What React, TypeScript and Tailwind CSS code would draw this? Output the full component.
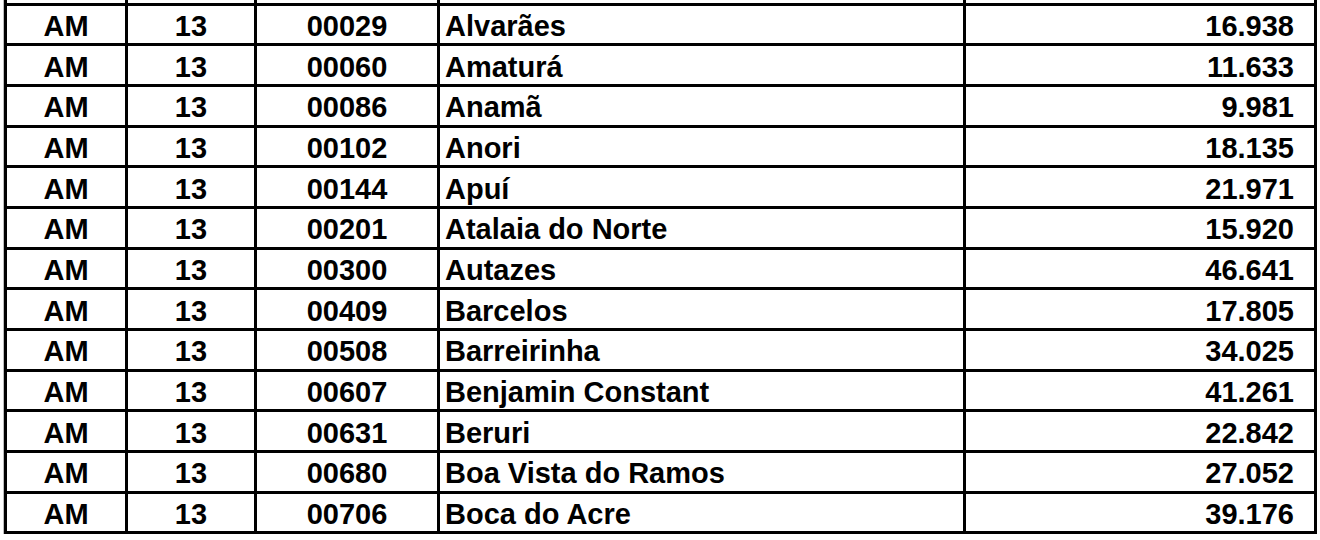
import React from "react";

type Row = {
  uf: string;
  code: string;
  mun: string;
  name: string;
  pop: string;
};

const rows: Row[] = [
  { uf: "AM", code: "13", mun: "00029", name: "Alvarães", pop: "16.938" },
  { uf: "AM", code: "13", mun: "00060", name: "Amaturá", pop: "11.633" },
  { uf: "AM", code: "13", mun: "00086", name: "Anamã", pop: "9.981" },
  { uf: "AM", code: "13", mun: "00102", name: "Anori", pop: "18.135" },
  { uf: "AM", code: "13", mun: "00144", name: "Apuí", pop: "21.971" },
  { uf: "AM", code: "13", mun: "00201", name: "Atalaia do Norte", pop: "15.920" },
  { uf: "AM", code: "13", mun: "00300", name: "Autazes", pop: "46.641" },
  { uf: "AM", code: "13", mun: "00409", name: "Barcelos", pop: "17.805" },
  { uf: "AM", code: "13", mun: "00508", name: "Barreirinha", pop: "34.025" },
  { uf: "AM", code: "13", mun: "00607", name: "Benjamin Constant", pop: "41.261" },
  { uf: "AM", code: "13", mun: "00631", name: "Beruri", pop: "22.842" },
  { uf: "AM", code: "13", mun: "00680", name: "Boa Vista do Ramos", pop: "27.052" },
  { uf: "AM", code: "13", mun: "00706", name: "Boca do Acre", pop: "39.176" },
];

const cell =
  "border-[3px] border-black h-[40.7px] pt-[4px] pb-0 leading-none align-middle";

export default function App() {
  return (
    <div className="w-[1320px] h-[540px] overflow-hidden bg-white">
      <div className="ml-[3px] w-[1311px] border-l border-[#bdbdbd]">
        <table
          className="table-fixed border-collapse w-[1310px] text-black font-bold text-[29px]"
          style={{ fontFamily: '"Liberation Sans", Arial, sans-serif' }}
        >
          <colgroup>
            <col className="w-[121px]" />
            <col className="w-[129px]" />
            <col className="w-[183px]" />
            <col className="w-[526px]" />
            <col className="w-[351px]" />
          </colgroup>
          <tbody>
            <tr>
              <td className="h-[4px] p-0 border-x-[3px] border-black" />
              <td className="h-[4px] p-0 border-x-[3px] border-black" />
              <td className="h-[4px] p-0 border-x-[3px] border-black" />
              <td className="h-[4px] p-0 border-x-[3px] border-black" />
              <td className="h-[4px] p-0 border-x-[3px] border-black" />
            </tr>
            {rows.map((r) => (
              <tr key={r.mun}>
                <td className={`${cell} px-0 text-center`}>{r.uf}</td>
                <td className={`${cell} px-0 text-center`}>{r.code}</td>
                <td className={`${cell} px-0 text-center`}>{r.mun}</td>
                <td className={`${cell} text-left pl-[5px] pr-0`}>{r.name}</td>
                <td className={`${cell} text-right pr-[20px] pl-0`}>{r.pop}</td>
              </tr>
            ))}
          </tbody>
        </table>
      </div>
    </div>
  );
}
